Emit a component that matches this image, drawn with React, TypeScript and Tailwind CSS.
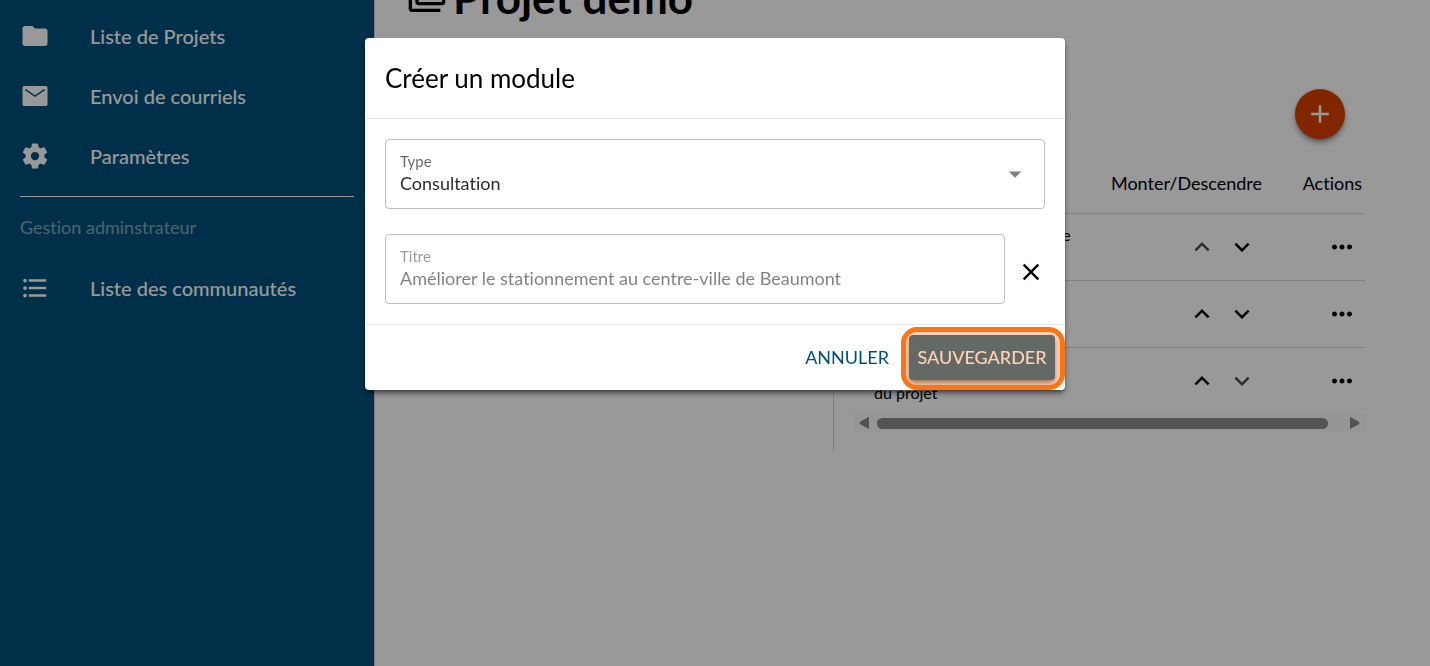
import React, { useState } from 'react';
import {
  MdAdd,
  MdClose,
  MdExpandLess,
  MdExpandMore,
  MdFolder,
  MdFormatListBulleted,
  MdMoreHoriz,
  MdOutlineFolderCopy,
} from 'react-icons/md';

function MailIcon({ size, className }: { size: number; className?: string }) {
  return (
    <svg width={size} height={size} viewBox="0 0 24 24" className={className} aria-hidden="true">
      <rect x="2" y="4" width="20" height="16" rx="1.4" fill="currentColor" />
      <path d="M4.300 6.900 12 12.100 19.700 6.900" fill="none" stroke="#00507a" strokeWidth="1.200" />
    </svg>
  );
}

function CogIcon({ size, className }: { size: number; className?: string }) {
  return (
    <svg width={size} height={size} viewBox="0 0 24 24" className={className} fill="currentColor" aria-hidden="true">
      <path d="M19.430 12.980c.04-.32.07-.64.07-.98s-.03-.66-.07-.98l2.110-1.650c.19-.15.24-.42.12-.64l-2-3.460c-.12-.22-.39-.3-.61-.22l-2.490 1c-.52-.4-1.080-.73-1.690-.98l-.38-2.650C14.460 2.180 14.250 2 14 2h-4c-.25 0-.46.18-.49.42l-.38 2.650c-.61.25-1.170.59-1.690.98l-2.490-1c-.23-.09-.49 0-.61.22l-2 3.460c-.13.22-.07.49.12.64l2.110 1.650c-.04.32-.07.65-.07.98s.03.66.07.98l-2.110 1.650c-.19.15-.24.42-.12.64l2 3.460c.12.22.39.3.61.22l2.490-1c.52.4 1.080.73 1.690.98l.38 2.650c.03.24.24.42.49.42h4c.25 0 .46-.18.49-.42l.38-2.650c.61-.25 1.170-.59 1.690-.98l2.490 1c.23.09.49 0 .61-.22l2-3.460c.12-.22.07-.49-.12-.64l-2.110-1.650zM12 15.300a3.300 3.300 0 1 1 0-6.600 3.300 3.300 0 0 1 0 6.600z" />
    </svg>
  );
}

const mainLinks = [
  { label: 'Liste de Projets', icon: MdFolder },
  { label: 'Envoi de courriels', icon: MailIcon },
  { label: 'Paramètres', icon: CogIcon },
];

const modules = [
  "Consultations sur l'avenir de la\u00a0place\u00a0du\u00a0marché",
  'Sondage',
  'Information sur les étapes du\u00a0projet',
];

function NavLink({ label, icon: Icon }: { label: string; icon: React.ElementType }) {
  return (
    <li>
      <a href="#" className="flex h-[60px] items-center gap-10 px-5 text-xl font-medium text-white">
        <Icon size={30} className="shrink-0" />
        <span>{label}</span>
      </a>
    </li>
  );
}

function Sidebar() {
  return (
    <nav className="w-[375px] shrink-0 border-r border-gray-300 bg-[#00507a] pt-[6px]">
      <ul>
        {mainLinks.map((link) => (
          <NavLink key={link.label} {...link} />
        ))}
      </ul>
      <hr className="mx-5 mt-[10px] border-white" />
      <p className="px-5 pt-[17px] pb-[18px] text-lg leading-[26px] text-white/50">Gestion adminstrateur</p>
      <ul>
        <NavLink label="Liste des communautés" icon={MdFormatListBulleted} />
      </ul>
    </nav>
  );
}

function ModuleTable() {
  return (
    <div className="w-[532px] shrink-0 border-l border-gray-300 pb-5 pl-5">
      <div className="flex justify-end pt-[50px] pr-5">
        <button
          type="button"
          aria-label="Ajouter un module"
          className="flex h-[50px] w-[50px] items-center justify-center rounded-full bg-[#d94000] text-white shadow-md shadow-black/40"
        >
          <MdAdd size={30} />
        </button>
      </div>
      <table className="mt-[14px] w-full">
        <thead>
          <tr className="h-[60px] border-b border-black/15 text-lg">
            <th className="pl-5 text-left font-normal">Titre</th>
            <th className="w-[180px] text-right font-normal">Monter/Descendre</th>
            <th className="w-[103px] pr-[3px] text-right font-normal">Actions</th>
          </tr>
        </thead>
        <tbody>
          {modules.map((name, i) => (
            <tr key={name} className="h-[67px] border-b border-black/15 last:border-0">
              <td className="pl-5 text-base">{name}</td>
              <td>
                <div className="flex justify-end">
                  <button
                    type="button"
                    aria-label="Monter"
                    disabled={i === 0}
                    className="flex h-10 w-10 items-center justify-center disabled:opacity-70"
                  >
                    <MdExpandLess size={30} />
                  </button>
                  <button
                    type="button"
                    aria-label="Descendre"
                    disabled={i === modules.length - 1}
                    className="flex h-10 w-10 items-center justify-center disabled:opacity-70"
                  >
                    <MdExpandMore size={30} />
                  </button>
                </div>
              </td>
              <td className="pr-[3px]">
                <button type="button" aria-label="Actions" className="ml-auto flex h-10 w-10 items-center justify-center">
                  <MdMoreHoriz size={30} />
                </button>
              </td>
            </tr>
          ))}
        </tbody>
      </table>
      <div className="flex h-[18px] items-center bg-neutral-50 px-[5px]">
        <svg width="10" height="12" viewBox="0 0 10 12" className="fill-[#8a8a8a]">
          <path d="M10 0V12L1 7.200Q0 6 1 4.800L8.500 0.500Q9 0 10 0Z" />
        </svg>
        <div className="mx-2 flex-1">
          <div className="h-[11px] w-[97%] rounded-full bg-[#8a8a8a]" />
        </div>
        <svg width="10" height="12" viewBox="0 0 10 12" className="fill-[#8a8a8a]">
          <path d="M0 0V12L9 7.200Q10 6 9 4.800L1.500 0.500Q1 0 0 0Z" />
        </svg>
      </div>
    </div>
  );
}

function CreateModuleDialog() {
  const [type, setType] = useState('Consultation');
  const [title, setTitle] = useState('');

  return (
    <div className="fixed inset-0 flex items-start justify-center bg-black/40 pt-[38px]">
      <form
        role="dialog"
        aria-labelledby="dialog-title"
        className="w-full max-w-[700px] rounded bg-white shadow-md shadow-black/50"
        onSubmit={(e) => e.preventDefault()}
      >
        <h2 id="dialog-title" className="border-b border-black/10 p-5 text-[26px] leading-10">
          Créer un module
        </h2>
        <div className="flex flex-col gap-[25px] p-5">
          <div className="relative flex h-[70px] flex-col justify-center rounded border border-black/25 px-[14px] pb-[2px]">
            <label htmlFor="type" className="text-[15px] leading-5 text-black/60">
              Type
            </label>
            <select
              id="type"
              value={type}
              onChange={(e) => setType(e.target.value)}
              className="w-full appearance-none bg-transparent text-lg leading-6 text-black/85 outline-none"
            >
              <option>Consultation</option>
              <option>Sondage</option>
              <option>Information</option>
            </select>
            <svg
              width="30"
              height="30"
              viewBox="0 0 24 24"
              className="pointer-events-none absolute top-[19px] right-[14px] fill-black/50"
            >
              <path d="M7 10l5 5 5-5z" />
            </svg>
          </div>
          <div className="flex items-center gap-3">
            <div className="flex h-[70px] flex-1 flex-col justify-center rounded border border-black/25 px-[14px] pb-[2px]">
              <label htmlFor="title" className="text-[15px] leading-5 text-black/40">
                Titre
              </label>
              <input
                id="title"
                value={title}
                onChange={(e) => setTitle(e.target.value)}
                placeholder="Améliorer le stationnement au centre-ville de Beaumont"
                className="w-full text-lg leading-6 outline-none placeholder:text-black/50"
              />
            </div>
            <button type="button" aria-label="Effacer" className="flex w-7 justify-center pt-[6px]">
              <MdClose size={28} />
            </button>
          </div>
        </div>
        <div className="flex justify-end gap-[10px] border-t border-black/10 p-[10px]">
          <button type="button" className="h-[45px] px-[10px] pb-[2px] text-lg text-[#00507a]">
            ANNULER
          </button>
          <div className="relative">
            <button
              type="submit"
              className="h-[45px] w-[146px] rounded bg-[#00507a] pb-[2px] text-lg font-medium text-white shadow-md shadow-black/50"
            >
              SAUVEGARDER
            </button>
            <div className="pointer-events-none absolute -top-2 -right-[10px] -bottom-[10px] -left-2 rounded-2xl border-[5px] border-[#fb7516] bg-[#f98f45]/40" />
          </div>
        </div>
      </form>
    </div>
  );
}

export default function App() {
  return (
    <div className="flex h-screen overflow-hidden bg-white font-['Lato',sans-serif] text-black [font-variant-ligatures:none]">
      <Sidebar />
      <main className="min-w-0 flex-1 pr-[65px] pl-8">
        <h1 className="-mt-[30px] flex items-center gap-[6px] text-[44px] leading-[54px] font-bold">
          <MdOutlineFolderCopy size={40} />
          <span>Projet démo</span>
        </h1>
        <div className="mt-[15px] flex">
          <div className="flex-1" />
          <ModuleTable />
        </div>
      </main>
      <CreateModuleDialog />
    </div>
  );
}
